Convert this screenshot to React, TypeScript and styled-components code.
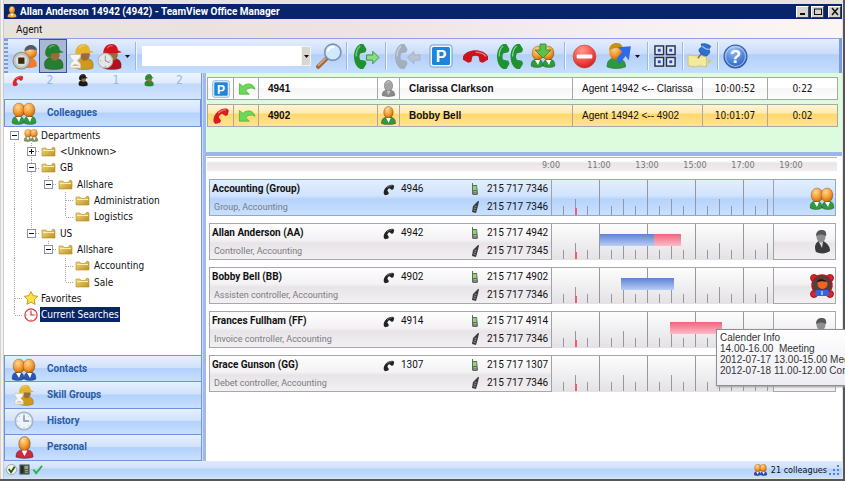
import React from "react";
import styled, { createGlobalStyle } from "styled-components";

const UI = `"DejaVu Sans Condensed", "Noto Sans", sans-serif`;
const COMPACT = `Roboto, "Noto Sans", sans-serif`;
const ARIAL = `"Liberation Sans", Arial, sans-serif`;

const GlobalStyle = createGlobalStyle`
  * { box-sizing: border-box; }
  html, body { margin: 0; padding: 0; }
  body { background: #eceae6; overflow: hidden; font: 10px/16px ${UI}; color: #111; }
  button, input { font: inherit; color: inherit; border-radius: 0; margin: 0; }
  ul { list-style: none; margin: 0; padding: 0; }
  svg { display: block; flex: none; overflow: visible; }
`;

/* ---------- window frame ---------- */

const Window = styled.div`
  display: flex;
  flex-direction: column;
  min-height: 100vh;
  padding: 4px 1px 1px 4px;
  border: solid #55565a;
  border-width: 0 2px 2px 0;
  background: linear-gradient(90deg, #d6d3ce 0 1px, #f4f2ee 1px 3px, #c9cbd0 3px 4px, #e6e3df 4px);
`;

const TitleBar = styled.header`
  display: flex;
  align-items: center;
  gap: 2px;
  height: 15px;
  padding: 0 1px 0 2px;
  background: #08246b;
  color: #fff;
`;

const Title = styled.h1`
  flex: 1;
  margin: 0;
  font: bold 10px/15px ${COMPACT};
  white-space: nowrap;
`;

const CaptionButton = styled.button<{ $gap?: boolean }>`
  display: grid;
  place-items: center;
  width: 13px;
  height: 12px;
  margin-left: ${(p) => (p.$gap ? 2 : 0)}px;
  padding: 0;
  border: 1px solid;
  border-color: #fff #404040 #404040 #fff;
  background: #d6d3ce;
`;

const MenuBar = styled.nav`
  display: flex;
  height: 19px;
  padding: 2px 6px 0;
  background: linear-gradient(90deg, #e7e3dc, #eee2e2 40%, #f6f0f1 75%, #fbf6f3);
`;

const MenuItem = styled.button`
  padding: 0 6px;
  border: 0;
  background: none;
  font: 10px/16px ${COMPACT};
`;

/* ---------- toolbar ---------- */

const Toolbar = styled.div`
  display: flex;
  align-items: center;
  height: 35px;
  border-top: 1px solid #8ba3e0;
  border-right: 3px solid #7b9ddf;
  background: linear-gradient(#e4eefe, #cadcfa 44%, #b4cff8 46%, #c5dffe);
`;

const Grip = styled.span`
  align-self: stretch;
  width: 4px;
  margin-right: 3px;
  background: repeating-linear-gradient(#7f9bd4 0 2px, #cfdffa 2px 4px);
`;

const ToolGroup = styled.div<{ $gap?: number; $pad?: number }>`
  display: flex;
  align-items: center;
  gap: ${(p) => p.$gap ?? 0}px;
  padding: 0 ${(p) => p.$pad ?? 0}px;
`;

const ToolButton = styled.button<{ $active?: boolean }>`
  display: grid;
  place-items: center;
  width: 28px;
  height: 34px;
  padding: 0;
  border: 1px solid ${(p) => (p.$active ? "#33549f" : "transparent")};
  background: ${(p) => (p.$active ? "#a9b7d3" : "none")};
`;

const DropButton = styled.button`
  display: grid;
  place-items: center;
  width: 9px;
  height: 28px;
  padding: 0;
  border: 0;
  background: none;
`;

const Separator = styled.span`
  width: 1px;
  height: 28px;
  margin: 0 3px;
  background: #9fb6dc;
  box-shadow: 1px 0 #edf4ff;
`;

const Combo = styled.div`
  display: flex;
  width: 169px;
  height: 20px;
  margin: 0 4px 0 3px;
  background: #fff;
`;

const ComboInput = styled.input`
  flex: 1;
  min-width: 0;
  border: 0;
  padding: 0 4px;
  background: transparent;
  outline: none;
`;

const ComboButton = styled.button`
  display: grid;
  place-items: center;
  width: 10px;
  padding: 0;
  border: 1px solid #f4f2ee;
  background: #d9d6d0;
`;

/* ---------- body ---------- */

const Body = styled.div`
  display: flex;
  flex: 1;
  background: #fff;
`;

const Sidebar = styled.aside`
  display: flex;
  flex-direction: column;
  width: 198px;
  border-right: 1px solid #7c98dc;
`;

const Splitter = styled.div`
  width: 4px;
  background: linear-gradient(90deg, #c7dcfb 0 1px, #a2b9f0 1px);
`;

const AgentCounts = styled.div`
  display: grid;
  grid-template-columns: 22px 44px 22px 44px 22px 1fr;
  align-items: start;
  height: 26px;
  padding: 0 2px;
  background: linear-gradient(#eef5ff 0, #dfeafd 10px, #bfd8fb 11px, #d4e6ff);
  color: #98b6ec;
  font: 12px/15px ${UI};
`;

const CountIcon = styled.span`
  display: grid;
  place-items: center;
  height: 14px;
`;

const Count = styled.span`
  text-align: center;
`;

const NavButton = styled.button`
  display: flex;
  flex: 1;
  align-items: center;
  gap: 10px;
  width: 100%;
  min-height: 26px;
  padding: 0 6px;
  border: 1px solid #6f94dd;
  border-width: 1px 0 0 1px;
  background: linear-gradient(#e6f0ff, #d1e2fc 46%, #b3d1fc 50%, #c8e0ff);
  color: #2b5ba5;
  font: bold 10px/16px ${COMPACT};
  text-align: left;
`;

const NavHead = styled(NavButton)`
  flex: none;
  height: 28px;
  border-width: 1px;
`;

const NavIcon = styled.span`
  display: grid;
  place-items: center;
  width: 26px;
`;

const NavStack = styled.div`
  display: flex;
  flex-direction: column;
  height: 106px;
  border-bottom: 1px solid #6f94dd;
`;

const TreePane = styled.div`
  flex: 1;
  padding: 0 2px;
  background: #fff;
`;

const Tree = styled.ul`
  display: flex;
  flex-direction: column;
  height: 196px;
`;

const TreeRow = styled.li`
  display: flex;
  flex: 1;
  align-items: center;
`;

const Guide = styled.span<{ $kind: string }>`
  display: grid;
  place-items: center;
  align-self: stretch;
  width: 17px;
  background-repeat: no-repeat;
  background-image: ${(p) =>
    p.$kind === "blank" || p.$kind === "root"
      ? "none"
      : "repeating-linear-gradient(#a8a8a8 0 1px, transparent 1px 2px)"}
    ${(p) =>
      p.$kind === "tee" || p.$kind === "end" || p.$kind === "box" || p.$kind === "boxend"
        ? ", repeating-linear-gradient(90deg, #a8a8a8 0 1px, transparent 1px 2px)"
        : ""};
  background-size: 1px ${(p) => (p.$kind === "end" || p.$kind === "boxend" ? "50%" : "100%")}, 8px 1px;
  background-position: 8px 0, 9px 8px;
`;

const Expander = styled.button`
  display: grid;
  place-items: center;
  width: 9px;
  height: 9px;
  padding: 0;
  border: 1px solid #8a93a5;
  background: #fff;
`;

const TreeIcon = styled.span`
  display: grid;
  place-items: center;
  width: 16px;
`;

const TreeLabel = styled.span<{ $selected?: boolean; $deep?: boolean }>`
  margin-left: ${(p) => (p.$deep ? 3 : 1)}px;
  padding: 0 1px;
  line-height: 15px;
  white-space: nowrap;
  background: ${(p) => (p.$selected ? "#08246b" : "transparent")};
  color: ${(p) => (p.$selected ? "#fff" : "#111")};
`;

const Main = styled.main`
  display: flex;
  flex: 1;
  flex-direction: column;
  min-width: 0;
`;

/* ---------- calls ---------- */

const CallPane = styled.section`
  height: 83px;
  padding: 0 4px 0 1px;
  border-bottom: 4px solid #9db4ec;
  background: #ddfbdd;
`;

const CallTable = styled.table`
  width: 100%;
  table-layout: fixed;
  border-collapse: separate;
  border-spacing: 0 4px;
`;

const CallRow = styled.tr<{ $active?: boolean }>`
  height: 23px;
  background: ${(p) =>
    p.$active
      ? "linear-gradient(#fff6da, #ffe9ac 40%, #ffd76a 44%, #ffe59a)"
      : "linear-gradient(#fff, #fff 45%, #f6f4f5 50%, #fff)"};
`;

const CallCell = styled.td<{ $strong?: boolean; $align?: string; $pad?: number; $ui?: boolean }>`
  padding: 0 0 0 ${(p) => p.$pad ?? 0}px;
  border: solid #a5aaa8;
  border-width: 1px 1px 1px 0;
  font: ${(p) => (p.$strong ? "bold" : "normal")} 10px/16px ${(p) => (p.$ui ? UI : ARIAL)};
  text-align: ${(p) => p.$align ?? "left"};
  white-space: nowrap;
  &:first-child { border-left-width: 1px; }
  svg { margin: 0 auto; }
`;

/* ---------- schedule ---------- */

const Schedule = styled.section`
  flex: 1;
  padding: 1px 5px 0 1px;
`;

const Ruler = styled.div`
  display: flex;
  justify-content: flex-end;
  height: 14px;
  padding-right: 22px;
  border-top: 1px solid #b9b4b8;
  background: linear-gradient(#fff 0 3px, #e9e4e8 5px, #f0edf0);
  color: #777;
  font-size: 9px;
`;

const Hour = styled.span`
  width: 48px;
  text-align: center;
  line-height: 15px;
`;

const People = styled.ul`
  display: flex;
  flex-direction: column;
  gap: 7px;
  padding: 8px 1px 0 2px;
`;

const Person = styled.li<{ $selected?: boolean }>`
  position: relative;
  display: grid;
  grid-template-columns: 1fr 89px 82px 223px 61px;
  height: 37px;
  border: 1px solid ${(p) => (p.$selected ? "#8fa9cd" : "#a9a7aa")};
  background: ${(p) =>
    p.$selected
      ? "linear-gradient(#e3eefe, #d2e3fd 45%, #b6d3fb 55%, #c9e1ff)"
      : "linear-gradient(#fefefe, #f4f2f4 45%, #e8e4e8 55%, #f2f0f2)"};
`;

const Stack = styled.div`
  display: flex;
  flex-direction: column;
  padding: 0 2px;
  font: 10px/18px ${COMPACT};
  white-space: nowrap;
`;

const Name = styled.strong`
  font-weight: bold;
`;

const Role = styled.span`
  padding-left: 2px;
  color: #7b7b82;
  font-size: 9px;
`;

const Line = styled.span<{ $gap: number }>`
  display: flex;
  align-items: center;
  gap: ${(p) => p.$gap}px;
  height: 18px;
`;

const Track = styled.div<{ $selected?: boolean }>`
  position: relative;
  border: solid #a3a1a5;
  border-width: 0 1px;
  background: ${(p) => (p.$selected ? "none" : "linear-gradient(#fdfdfd, #e3e1e4)")};
`;

const Presence = styled.div`
  display: flex;
  align-items: center;
  justify-content: flex-end;
  padding-right: 1px;
`;

const Tooltip = styled.div`
  position: absolute;
  z-index: 2;
  top: 17px;
  left: 164px;
  width: 160px;
  height: 57px;
  padding: 2px 3px;
  border: 1px solid #8f8f93;
  background: linear-gradient(#fff, #ececf3);
  box-shadow: 1px 1px 2px #999;
  color: #333;
  font: 10px/11px ${ARIAL};
  white-space: pre;
`;

/* ---------- status bar ---------- */

const StatusBar = styled.footer`
  display: flex;
  align-items: center;
  gap: 2px;
  height: 17px;
  padding: 0 2px;
  background: linear-gradient(#dfebfd, #cfe1fc 40%, #b5d2fb 50%, #c8e0ff);
`;

const StatusText = styled.span`
  display: flex;
  align-items: center;
  gap: 4px;
  margin-left: auto;
  font-size: 9px;
  white-space: nowrap;
`;

/* ---------- icons ---------- */

type Size = { size?: number };

const Defs = () => (
  <svg width="0" height="0" aria-hidden="true">
    <defs>
      <radialGradient id="skin" cx=".4" cy=".3" r=".7">
        <stop offset="0" stopColor="#ffd59a" />
        <stop offset=".6" stopColor="#f59a2c" />
        <stop offset="1" stopColor="#c8690f" />
      </radialGradient>
      <radialGradient id="redball" cx=".4" cy=".25" r=".8">
        <stop offset="0" stopColor="#ff9a8e" />
        <stop offset=".6" stopColor="#f24a44" />
        <stop offset="1" stopColor="#c31d1d" />
      </radialGradient>
      <radialGradient id="blueball" cx=".4" cy=".2" r=".9">
        <stop offset="0" stopColor="#9cc0f5" />
        <stop offset=".6" stopColor="#4a7fd6" />
        <stop offset="1" stopColor="#2a55a8" />
      </radialGradient>
      <linearGradient id="barBlue" x1="0" y1="0" x2="0" y2="1">
        <stop offset="0" stopColor="#5d82d2" />
        <stop offset="1" stopColor="#b9cdf5" />
      </linearGradient>
      <linearGradient id="barRed" x1="0" y1="0" x2="0" y2="1">
        <stop offset="0" stopColor="#f0647f" />
        <stop offset="1" stopColor="#fbbcc8" />
      </linearGradient>
      <linearGradient id="folder" x1="0" y1="0" x2="1" y2="1">
        <stop offset="0" stopColor="#f3dc86" />
        <stop offset="1" stopColor="#c08f1c" />
      </linearGradient>
    </defs>
  </svg>
);

const Icon = ({ size = 24, children }: Size & { children: React.ReactNode }) => (
  <svg width={size} height={size} viewBox="0 0 24 24" aria-hidden="true">
    {children}
  </svg>
);

const Arrow = () => (
  <svg width="5" height="3" viewBox="0 0 5 3" aria-hidden="true">
    <path d="M0 0h5L2.500 3z" fill="#111" />
  </svg>
);

const HANDSET =
  "M12 0l3 0 3 5-1 3-5 1c-1 2-1 4 0 6l5 1 1 3-3 5-3 0C8 22 6 17 6 12S8 2 12 0z";

const Handset = ({ size, color, turn = 0 }: Size & { color: string; turn?: number }) => (
  <Icon size={size}>
    <g transform={`rotate(${turn} 12 12)`}>
      <path d={HANDSET} fill={color} />
      <path d="M12 2C9 4 8 8 8 12" fill="none" stroke="#fff" strokeOpacity=".4" strokeWidth="1.500" />
    </g>
  </Icon>
);

const CapFigure = ({ body, cap, face = "#9b6b3b" }: { body: string; cap: string; face?: string }) => (
  <g>
    <path d="M4 23c-2-5 0-8 4-10l8 1c4 1 6 4 5 9-4 2-13 2-17 0z" fill={body} stroke="#000" strokeOpacity=".2" />
    <path d="M8 7h9l1 3c0 3-2 6-5 6s-5-4-5-9z" fill={face} />
    <path d="M4 9C4 3 8 0 12 0c4 0 6 3 6 6l4 2c-4 1-8 1-12 1l-1 4c-3 0-5-2-5-4z" fill={cap} />
    <path d="M8 4c1-2 3-3 5-2" stroke="#fff" strokeOpacity=".4" fill="none" />
  </g>
);

const AgentCap = ({ size, color }: Size & { color: string }) => (
  <Icon size={size}>
    <CapFigure body={color} cap={color} />
  </Icon>
);

const AgentStop = () => (
  <Icon size={25}>
    <path d="M10 22c0-6 2-9 6-9s7 3 7 8c-3 2-9 3-13 1z" fill="#ef7d2c" />
    <circle cx="17" cy="8" r="6" fill="url(#skin)" />
    <path d="M11 7c0-4 3-6 6-6s6 2 6 5c-4-1-8-1-12 1z" fill="#555b66" />
    <circle cx="8" cy="16" r="8" fill="#c3c3c1" stroke="#8c8c88" />
    <circle cx="8" cy="16" r="5.500" fill="#dededb" />
    <rect x="5" y="13" width="6" height="6" fill="#3a2a10" />
  </Icon>
);

const AgentHourglass = ({ size = 25 }: Size) => (
  <Icon size={size}>
    <g transform="translate(2 0)">
      <CapFigure body="#cf9a1c" cap="#e5b32c" />
    </g>
    <path d="M1 10h10v2c0 2-2 3-3 4 1 1 3 2 3 4v3H1v-3c0-2 2-3 3-4-1-1-3-2-3-4z" fill="#f4f6f8" stroke="#c5c5c0" />
    <path d="M3 21c1-2 5-2 7 0z" fill="#d9b877" />
  </Icon>
);

const AgentClock = () => (
  <Icon size={25}>
    <g transform="translate(2 0)">
      <CapFigure body="#b3121d" cap="#d3141f" />
    </g>
    <circle cx="8" cy="16" r="7" fill="#e4e6e7" stroke="#b5b5b5" />
    <path d="M8 11v5l4 2M3 16h1M12 16h1M8 21v1" stroke="#999" fill="none" />
  </Icon>
);

const Magnifier = () => (
  <Icon size={26}>
    <path d="M2 22l8-8" stroke="#a3673c" strokeWidth="4" strokeLinecap="round" />
    <path d="M2 21l7-7" stroke="#dba878" strokeWidth="1.500" />
    <circle cx="15.500" cy="8.500" r="7.500" fill="#cfeaff" stroke="#7d93b5" strokeWidth="1.500" />
    <path d="M11 8c0-3 3-5 6-4" stroke="#fff" strokeWidth="2" fill="none" />
  </Icon>
);

const Transfer = ({ color, arrow, flip }: { color: string; arrow: string; flip?: boolean }) => (
  <Icon size={25}>
    <g transform="translate(-6 0)">
      <path d={HANDSET} fill={color} />
      <path d="M12 2C9 4 8 8 8 12" fill="none" stroke="#fff" strokeOpacity=".4" strokeWidth="1.500" />
    </g>
    <path
      transform={flip ? "rotate(180 18 13)" : undefined}
      d="M12 10.500h6V7l6 6-6 6v-3.500h-6z"
      fill={arrow}
      stroke={color}
      strokeWidth=".8"
    />
  </Icon>
);

const Parking = ({ size = 24 }: Size) => (
  <Icon size={size}>
    <rect x="1" y="1" width="22" height="22" rx="2.500" fill="#f3f8ff" stroke="#6d9ac8" />
    <rect x="3" y="3" width="18" height="18" rx="1.500" fill="#1d86dc" />
    <text x="12" y="18" textAnchor="middle" fill="#fff" fontFamily="Liberation Sans" fontWeight="bold" fontSize="16">
      P
    </text>
  </Icon>
);

const TwinHandsets = () => (
  <Icon size={25}>
    <g fill="#1e9231">
      <path transform="translate(-6 0)" d={HANDSET} />
      <path transform="translate(7 0)" d={HANDSET} />
    </g>
    <path d="M6 2C3 4 2 8 2 12M19 2c-3 2-4 6-4 10" fill="none" stroke="#9be09f" />
  </Icon>
);

const Pair = ({ size = 26, shirt = "#2f9a3c", arrow }: Size & { shirt?: string; arrow?: boolean }) => (
  <Icon size={size}>
    <g stroke="#000" strokeOpacity=".3" strokeWidth=".7">
      <path d="M0 22c0-5 2-7 6-7s6 2 6 7c-3 2-9 2-12 0zM12 22c0-5 2-7 6-7s6 2 6 7c-3 2-9 2-12 0z" fill={shirt} />
      <ellipse cx="7" cy="9" rx="6" ry="7" fill="url(#skin)" />
      <ellipse cx="17" cy="9" rx="6" ry="7" fill="url(#skin)" />
    </g>
    <path d="M4 16l3 5 2-5zM15 16l3 5 2-5z" fill="#fff" />
    {arrow && <path d="M9 0h6v6h5l-8 8-8-8h5z" fill="#5cc04c" stroke="#2b8a2a" strokeWidth=".8" />}
  </Icon>
);

const Single = ({ size = 26, shirt = "#2f9a3c", gray }: Size & { shirt?: string; gray?: boolean }) => (
  <Icon size={size}>
    <path d="M3 22c0-6 3-8 9-8s9 2 9 8c-5 2-13 2-18 0z" fill={shirt} stroke="#000" strokeOpacity=".3" />
    <ellipse cx="12" cy="8" rx="6" ry="7.500" fill={gray ? "#a3a3a3" : "url(#skin)"} stroke="#000" strokeOpacity=".3" />
    <path d="M9 15l3 6 3-6z" fill={gray ? "#c4c4c4" : "#fff"} />
    <path d="M9 5c1-2 3-3 5-2" stroke="#fff" strokeOpacity=".6" fill="none" />
  </Icon>
);

const Forward = () => (
  <Icon size={26}>
    <path d="M1 22c0-6 3-8 8-8s9 2 9 8c-5 2-12 2-17 0z" fill="#2f9a3c" stroke="#1b6a26" strokeWidth=".6" />
    <ellipse cx="9" cy="8" rx="6" ry="7.500" fill="url(#skin)" />
    <path d="M3 7c0-5 3-7 7-7s6 3 5 6c-4-2-8-2-12 1z" fill="#c78e1f" />
    <path d="M11 4l12-1-2 13-3-4-6 8-2-6 5-6z" fill="#2f6be8" />
  </Icon>
);

const NoEntry = () => (
  <Icon size={25}>
    <circle cx="12" cy="12" r="11" fill="url(#redball)" stroke="#d04640" strokeWidth=".6" />
    <rect x="4.500" y="10" width="15" height="4" rx="1" fill="#fff" />
  </Icon>
);

const Keypad = () => (
  <Icon size={23}>
    {[1, 13].map((x) =>
      [1, 13].map((y) => (
        <g key={`${x}-${y}`}>
          <rect x={x} y={y} width="9" height="9" fill="#dfe8fa" stroke="#2a3142" strokeWidth="1.500" />
          <rect x={x + 3} y={y + 3} width="3" height="3" fill="#2c4eb0" />
        </g>
      ))
    )}
  </Icon>
);

const NotePin = () => (
  <Icon size={26}>
    <path d="M1 11l8 1 2-1 7 2v9l-7-1-3 1-7-1z" fill="#f2eb9c" stroke="#c9bd5c" strokeWidth=".7" />
    <path d="M10 14l4-5" stroke="#777" strokeWidth="1.500" />
    <path d="M13 1c3-1 7 0 9 2l-2 3c2 2 1 4-2 6-3 0-6-2-7-5 0-2 2-3 3-3z" fill="#2d6fcf" stroke="#174a94" strokeWidth=".6" />
    <path d="M14 3c2 2 4 3 7 3" stroke="#8fb8f0" fill="none" />
    <path d="M19 16l4-1-3 5z" fill="#d8c860" />
  </Icon>
);

const Help = () => (
  <Icon size={25}>
    <circle cx="12" cy="12" r="11" fill="url(#blueball)" stroke="#30589f" />
    <circle cx="12" cy="12" r="9.500" fill="none" stroke="#cfe0fb" strokeOpacity=".7" />
    <text x="12" y="18.500" textAnchor="middle" fill="#fff" fontFamily="Liberation Sans" fontWeight="bold" fontSize="18">
      ?
    </text>
  </Icon>
);

const CallIn = () => (
  <Icon size={17}>
    <path d="M2 5v15h14l-5-5c3-4 8-5 13-2C22 5 13 3 7 9z" fill="#6cd858" stroke="#3fae32" />
  </Icon>
);

const Folder = () => (
  <svg width="13" height="11" viewBox="0 0 13 11" aria-hidden="true">
    <path d="M0 10V2h4l1 1.500h4L11 1l2 1v8z" fill="url(#folder)" stroke="#b68d2c" strokeWidth=".6" />
    <path d="M1 4.500h11" stroke="#fbeeb4" />
  </svg>
);

const Star = () => (
  <Icon size={14}>
    <path d="M12 1l3.500 7 8 1-6 6 1.500 8-7-4-7 4 1.500-8-6-6 8-1z" fill="#ffe14a" stroke="#b8930c" strokeWidth="1.500" />
  </Icon>
);

const Clock = ({ size = 15, rim, face, hands }: Size & { rim: string; face: string; hands: string }) => (
  <Icon size={size}>
    <circle cx="12" cy="12" r="10.500" fill={face} stroke={rim} strokeWidth="2" />
    <path d="M12 3v2M12 19v2M3 12h2M19 12h2M6 6l1 1M18 6l-1 1M6 18l1-1M18 18l-1-1" stroke={rim} />
    <path d="M12 5v7h6" fill="none" stroke={hands} strokeWidth="1.800" />
  </Icon>
);

const Mobile = () => (
  <svg width="7" height="12" viewBox="0 0 7 12" aria-hidden="true">
    <path d="M1 0h1v2h4l1 9-1 1H2l-1-1z" fill="#5f6b5c" />
    <rect x="2" y="3" width="3.500" height="4" fill="#8fd07a" />
    <path d="M2.500 8.500h3M2.500 10h3" stroke="#c9cfc6" strokeWidth=".7" />
  </svg>
);

const Cordless = () => (
  <svg width="8" height="12" viewBox="0 0 8 12" aria-hidden="true">
    <path d="M5 2l2-2 1 0-1 5-2 7-4-1 1-6z" fill="#3b3b3d" />
    <path d="M3.500 5l2 .5M3 7l2 .5M2.500 9l2 .5" stroke="#aaa" strokeWidth=".8" />
  </svg>
);

const Suit = () => (
  <Icon size={24}>
    <path d="M6 22c-2-5-1-9 3-11h4c4 2 7 5 7 10-4 3-10 3-14 1z" fill="#3a3a3d" />
    <path d="M9 12l3 6 1-6z" fill="#d5d5d5" />
    <ellipse cx="11" cy="6.500" rx="4.500" ry="6" fill="#8e8e90" />
    <path d="M6 6c0-5 3-6 6-6s5 2 4 6c-3-2-6-2-10 0z" fill="#58585b" />
  </Icon>
);

const Busy = () => (
  <Icon size={24}>
    <g fill="#e32222" stroke="#7c1010" strokeWidth=".8">
      <circle cx="4" cy="4" r="3.500" />
      <circle cx="20" cy="4" r="3.500" />
      <circle cx="4" cy="20" r="3.500" />
      <circle cx="20" cy="20" r="3.500" />
    </g>
    <circle cx="12" cy="11" r="10" fill="#4c4040" stroke="#b51a1a" strokeWidth="1.500" />
    <circle cx="12.500" cy="10" r="5" fill="#f0641e" />
    <path d="M7 8c1-4 8-4 10 0-3-1-6-1-10 0z" fill="#1e1410" />
    <rect x="5" y="16" width="14" height="6" rx="2" fill="#2f66e0" />
    <path d="M12 17v4" stroke="#fff" />
  </Icon>
);

const Check = () => (
  <Icon size={11}>
    <path d="M3 12l6 8L22 4" fill="none" stroke="#2cb43c" strokeWidth="4" />
  </Icon>
);

const CheckBall = () => (
  <Icon size={11}>
    <circle cx="12" cy="12" r="11" fill="#eef3ea" stroke="#9aa894" strokeWidth="2" />
    <path d="M6 11l5 7 8-12" fill="none" stroke="#24521f" strokeWidth="4" />
  </Icon>
);

const Device = () => (
  <Icon size={11}>
    <rect x="1" y="1" width="22" height="22" fill="#4a544a" />
    <rect x="4" y="4" width="6" height="16" fill="#262b26" />
    <rect x="12" y="4" width="8" height="7" fill="#92a58d" />
    <path d="M13 14h7M13 18h7" stroke="#a5b0a2" strokeWidth="2" />
  </Icon>
);

const SizeGrip = () => (
  <svg width="11" height="13" viewBox="0 0 11 13" aria-hidden="true">
    <g fill="#5c80c6">
      {[[8, 2], [8, 6], [8, 10], [4, 6], [4, 10], [0, 10]].map(([x, y]) => (
        <rect key={`${x}-${y}`} x={x} y={y} width="2" height="2" />
      ))}
    </g>
  </svg>
);

/* ---------- data ---------- */

type Node = { label: string; guides: string[]; open?: boolean; icon?: "group" | "star" | "clock"; selected?: boolean };

const NODES: Node[] = [
  { label: "Departments", guides: ["box"], open: true, icon: "group" },
  { label: "<Unknown>", guides: ["line", "box"], open: false },
  { label: "GB", guides: ["line", "box"], open: true },
  { label: "Allshare", guides: ["line", "line", "boxend"], open: true },
  { label: "Administration", guides: ["line", "line", "blank", "tee"] },
  { label: "Logistics", guides: ["line", "line", "blank", "end"] },
  { label: "US", guides: ["line", "boxend"], open: true },
  { label: "Allshare", guides: ["line", "blank", "boxend"], open: true },
  { label: "Accounting", guides: ["line", "blank", "blank", "tee"] },
  { label: "Sale", guides: ["line", "blank", "blank", "end"] },
  { label: "Favorites", guides: ["tee"], icon: "star" },
  { label: "Current Searches", guides: ["end"], icon: "clock", selected: true },
];

const CALLS = [
  { number: "4941", name: "Clarissa Clarkson", route: "Agent 14942 <-- Clarissa", time: "10:00:52", length: "0:22" },
  { number: "4902", name: "Bobby Bell", route: "Agent 14942 <-- 4902", time: "10:01:07", length: "0:02", active: true },
];

type Bar = { from: number; to: number; color: "barBlue" | "barRed" };

const PEOPLE: {
  name: string;
  role: string;
  ext: string;
  mobile: string;
  cordless: string;
  bars: Bar[];
  presence?: React.ReactNode;
  tip?: string[];
}[] = [
  {
    name: "Accounting (Group)", role: "Group, Accounting", ext: "4946",
    mobile: "215 717 7346", cordless: "215 717 7346", bars: [], presence: <Pair size={24} />,
  },
  {
    name: "Allan Anderson (AA)", role: "Controller, Accounting", ext: "4942",
    mobile: "215 717 4942", cordless: "215 717 7345",
    bars: [{ from: 48, to: 102, color: "barBlue" }, { from: 102, to: 129, color: "barRed" }], presence: <Suit />,
  },
  {
    name: "Bobby Bell (BB)", role: "Assisten controller, Accounting", ext: "4902",
    mobile: "215 717 4902", cordless: "215 717 7346",
    bars: [{ from: 69, to: 122, color: "barBlue" }], presence: <Busy />,
  },
  {
    name: "Frances Fullham (FF)", role: "Invoice controller, Accounting", ext: "4914",
    mobile: "215 717 4914", cordless: "215 717 7346",
    bars: [{ from: 118, to: 170, color: "barRed" }], presence: <Suit />,
    tip: ["Calender Info", "14.00-16.00  Meeting", "2012-07-17 13.00-15.00 Mee", "2012-07-18 11.00-12.00 Con"],
  },
  {
    name: "Grace Gunson (GG)", role: "Debet controller, Accounting", ext: "1307",
    mobile: "215 717 1307", cordless: "215 717 7346", bars: [],
  },
];

const HOURS = ["9:00", "11:00", "13:00", "15:00", "17:00", "19:00"];

const TICKS = Array.from({ length: 18 }, (_, i) => i + 1);

const Timeline = ({ bars }: { bars: Bar[] }) => (
  <svg width="221" height="35" viewBox="0 0 221 35" aria-hidden="true">
    {TICKS.map((i) => {
      const top = i % 4 === 0 ? 0 : i % 4 === 2 ? 19 : 26;
      return <rect key={i} x={i * 12 - 1} y={top} width="1" height={35 - top} fill="#97979d" />;
    })}
    <rect x="23" y="28" width="2" height="7" fill="#e8606e" />
    {bars.map((b) => (
      <rect key={b.from} x={b.from} y="10" width={b.to - b.from} height="12" fill={`url(#${b.color})`} />
    ))}
  </svg>
);

const treeIcon = (n: Node) =>
  n.icon === "group" ? (
    <Pair size={14} shirt="#7b9a5c" />
  ) : n.icon === "star" ? (
    <Star />
  ) : n.icon === "clock" ? (
    <Clock size={14} rim="#d8343c" face="#fff" hands="#c0202a" />
  ) : (
    <Folder />
  );

export default function App() {
  return (
    <Window>
      <GlobalStyle />
      <TitleBar>
        <Single size={12} shirt="#e9b048" />
        <Title>Allan Anderson 14942 (4942) - TeamView Office Manager</Title>
        <CaptionButton aria-label="Minimize">
          <svg width="8" height="7"><rect x="1" y="5" width="5" height="2" fill="#111" /></svg>
        </CaptionButton>
        <CaptionButton aria-label="Maximize">
          <svg width="8" height="7"><path d="M0 1h8M.5 1v6M7.500 1v6M0 6.500h8" stroke="#111" fill="none" /></svg>
        </CaptionButton>
        <CaptionButton aria-label="Close" $gap>
          <svg width="8" height="7"><path d="M1 0l6 7M7 0L1 7" stroke="#111" strokeWidth="1.500" /></svg>
        </CaptionButton>
      </TitleBar>

      <MenuBar>
        <MenuItem>Agent</MenuItem>
      </MenuBar>

      <Toolbar role="toolbar" aria-label="Call tools">
        <Grip />
        <ToolGroup>
          <ToolButton aria-label="Log off"><AgentStop /></ToolButton>
          <ToolButton aria-label="Available" $active><AgentCap size={25} color="#23802f" /></ToolButton>
          <ToolButton aria-label="Wrap-up"><AgentHourglass /></ToolButton>
          <ToolButton aria-label="Pause"><AgentClock /></ToolButton>
          <DropButton aria-label="Pause options"><Arrow /></DropButton>
        </ToolGroup>
        <Separator />
        <Combo>
          <ComboInput aria-label="Search" />
          <ComboButton aria-label="Recent searches"><Arrow /></ComboButton>
        </Combo>
        <ToolButton aria-label="Search"><Magnifier /></ToolButton>
        <Separator />
        <ToolGroup $pad={2}>
          <ToolButton aria-label="Transfer"><Transfer color="#1e9231" arrow="#8fd886" /></ToolButton>
        </ToolGroup>
        <Separator />
        <ToolGroup $gap={6} $pad={4}>
          <ToolButton aria-label="Retrieve"><Transfer color="#a3aebf" arrow="#b9c3d2" flip /></ToolButton>
          <ToolButton aria-label="Park"><Parking /></ToolButton>
          <ToolButton aria-label="Hang up"><Handset size={25} color="#c8141c" turn={90} /></ToolButton>
          <ToolButton aria-label="Conference"><TwinHandsets /></ToolButton>
          <ToolButton aria-label="Join group"><Pair size={24} arrow /></ToolButton>
        </ToolGroup>
        <Separator />
        <ToolGroup $gap={7} $pad={2}>
          <ToolButton aria-label="Do not disturb"><NoEntry /></ToolButton>
          <ToolGroup>
            <ToolButton aria-label="Forward"><Forward /></ToolButton>
            <DropButton aria-label="Forward options"><Arrow /></DropButton>
          </ToolGroup>
        </ToolGroup>
        <Separator />
        <ToolButton aria-label="Keypad"><Keypad /></ToolButton>
        <Separator />
        <ToolButton aria-label="Notes"><NotePin /></ToolButton>
        <Separator />
        <ToolButton aria-label="Help"><Help /></ToolButton>
      </Toolbar>

      <Body>
        <Sidebar>
          <AgentCounts>
            <CountIcon><Handset size={13} color="#e02424" turn={45} /></CountIcon>
            <Count>2</Count>
            <CountIcon><AgentCap size={12} color="#1a1a1a" /></CountIcon>
            <Count>1</Count>
            <CountIcon><AgentCap size={12} color="#2b8a2f" /></CountIcon>
            <Count>2</Count>
          </AgentCounts>
          <NavHead>
            <NavIcon><Pair size={24} /></NavIcon>
            Colleagues
          </NavHead>
          <TreePane>
            <Tree role="tree" aria-label="Departments">
              {NODES.map((n, i) => (
                <TreeRow key={i} role="treeitem" aria-level={n.guides.length} aria-selected={!!n.selected}>
                  {n.guides.map((g, j) => (
                    <Guide key={j} $kind={i === 0 ? "root" : g}>
                      {j === n.guides.length - 1 && n.open !== undefined && (
                        <Expander aria-label={`Toggle ${n.label}`}>
                          <svg width="5" height="5">
                            <path d={n.open ? "M0 2.500h5" : "M0 2.500h5M2.500 0v5"} stroke="#111" />
                          </svg>
                        </Expander>
                      )}
                    </Guide>
                  ))}
                  <TreeIcon>{treeIcon(n)}</TreeIcon>
                  <TreeLabel $selected={n.selected} $deep={n.guides.length > 1}>{n.label}</TreeLabel>
                </TreeRow>
              ))}
            </Tree>
          </TreePane>
          <NavStack>
            <NavButton><NavIcon><Pair size={24} shirt="#2a56b4" /></NavIcon>Contacts</NavButton>
            <NavButton><NavIcon><AgentHourglass size={20} /></NavIcon>Skill Groups</NavButton>
            <NavButton><NavIcon><Clock size={20} rim="#a9b4c4" face="#eef4fb" hands="#7f93b0" /></NavIcon>History</NavButton>
            <NavButton><NavIcon><Single size={23} shirt="#cf2a3c" /></NavIcon>Personal</NavButton>
          </NavStack>
        </Sidebar>
        <Splitter />
        <Main>
          <CallPane aria-label="Calls">
            <CallTable>
              <colgroup>
                <col width="27" />
                <col width="25" />
                <col width="119" />
                <col width="22" />
                <col />
                <col width="130" />
                <col width="65" />
                <col width="70" />
              </colgroup>
              <tbody>
                {CALLS.map((c) => (
                  <CallRow key={c.number} $active={c.active}>
                    <CallCell>{c.active ? <Handset size={19} color="#d81c20" turn={45} /> : <Parking size={18} />}</CallCell>
                    <CallCell><CallIn /></CallCell>
                    <CallCell $strong $pad={9}>{c.number}</CallCell>
                    <CallCell>{c.active ? <Single size={19} /> : <Single size={17} shirt="#8a8a8a" gray />}</CallCell>
                    <CallCell $strong $pad={9}>{c.name}</CallCell>
                    <CallCell $pad={9}>{c.route}</CallCell>
                    <CallCell $ui $align="center">{c.time}</CallCell>
                    <CallCell $ui $align="center">{c.length}</CallCell>
                  </CallRow>
                ))}
              </tbody>
            </CallTable>
          </CallPane>

          <Schedule aria-label="Schedule">
            <Ruler>
              {HOURS.map((h) => (
                <Hour key={h}>{h}</Hour>
              ))}
            </Ruler>
            <People>
              {PEOPLE.map((p, i) => (
                <Person key={p.name} $selected={i === 0}>
                  <Stack>
                    <Name>{p.name}</Name>
                    <Role>{p.role}</Role>
                  </Stack>
                  <Stack>
                    <Line $gap={6}><Handset size={13} color="#222" turn={45} />{p.ext}</Line>
                  </Stack>
                  <Stack>
                    <Line $gap={9}><Mobile />{p.mobile}</Line>
                    <Line $gap={8}><Cordless />{p.cordless}</Line>
                  </Stack>
                  <Track $selected={i === 0}>
                    <Timeline bars={p.bars} />
                    {p.tip && <Tooltip role="tooltip">{p.tip.join("\n")}</Tooltip>}
                  </Track>
                  <Presence>{p.presence}</Presence>
                </Person>
              ))}
            </People>
          </Schedule>
        </Main>
      </Body>

      <StatusBar>
        <CheckBall />
        <Device />
        <Check />
        <StatusText>
          <Pair size={13} shirt="#33499a" />
          21 colleagues
        </StatusText>
        <SizeGrip />
      </StatusBar>
      <Defs />
    </Window>
  );
}
